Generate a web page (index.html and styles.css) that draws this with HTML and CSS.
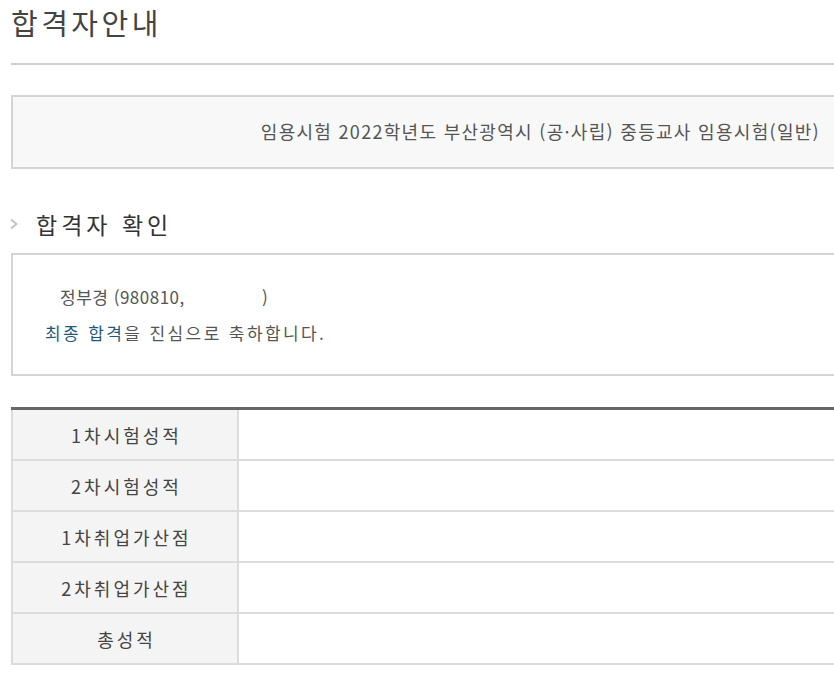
FILE: index.html
```html
<!DOCTYPE html>
<html lang="ko">
<head>
    <meta charset="UTF-8">
    <meta name="viewport" content="width=device-width, initial-scale=1.0">
    <title>합격자안내</title>
    <link rel="stylesheet" href="styles.css">
</head>
<body>
    <div class="page">
        <h1 class="page-title">합격자안내</h1>

        <!-- 시험 정보 -->
        <div class="exam-box">
            <p>임용시험 2022학년도 부산광역시 (공·사립) 중등교사 임용시험(일반)</p>
        </div>

        <h2 class="section-title">
            <svg class="arrow" width="10" height="12" viewBox="0 0 10 12">
                <path d="M2 1.5 L7.5 6 L2 10.5" fill="none" stroke="#c4c4c4" stroke-width="2"/>
            </svg>
            합격자 확인
        </h2>

        <!-- 합격 메시지 -->
        <div class="result-box">
            <p class="name">정부경 (980810, <span class="blank"></span>)</p>
            <p><span class="pass">최종 합격</span>을 진심으로 축하합니다.</p>
        </div>

        <!-- 성적 -->
        <table class="score-table">
            <tr><th>1차시험성적</th><td></td></tr>
            <tr><th>2차시험성적</th><td></td></tr>
            <tr><th>1차취업가산점</th><td></td></tr>
            <tr><th>2차취업가산점</th><td></td></tr>
            <tr><th>총성적</th><td></td></tr>
        </table>
    </div>
</body>
</html>
```

FILE: styles.css
```css
/* 기본 */
body {
    margin: 0;
    font-family: "Noto Sans CJK KR", "Noto Sans", sans-serif;
    color: #555;
    background: #fff;
    overflow: hidden;
}

.page {
    padding-left: 11px;
}

p {
    margin: 0;
}

/* 페이지 제목 */
.page-title {
    margin: 0;
    padding: 4px 0 23px;
    font-size: 29px;
    font-weight: normal;
    line-height: 36px;
    letter-spacing: 3.5px;
    color: #444;
    border-bottom: 2px solid #cfcfcf;
}

/* 시험 정보 박스 */
.exam-box {
    margin-top: 30px;
    border: 2px solid #d4d4d4;
    border-right: none;
    background-color: #f8f8f8;
    display: flex;
    align-items: center;
    justify-content: flex-end;
    padding: 0 14px 3px 0;
    box-sizing: border-box;
    height: 74px;
    font-size: 18px;
    letter-spacing: 1.3px;
    color: #555;
}

/* 소제목 */
.section-title {
    margin: 40px 0 0;
    font-size: 23px;
    font-weight: normal;
    line-height: 30px;
    letter-spacing: 4px;
    color: #333;
    display: flex;
    align-items: center;
    gap: 17px;
    margin-left: -2px;
}

.arrow {
    display: block;
}

/* 합격 메시지 박스 */
.result-box {
    margin-top: 14px;
    border: 2px solid #d4d4d4;
    border-right: none;
    padding: 24px 0 23px 32px;
    font-size: 17px;
    line-height: 36px;
    letter-spacing: 2.4px;
    color: #555;
}

.result-box .name {
    padding-left: 15px;
    letter-spacing: 0.5px;
}

.blank {
    display: inline-block;
    width: 72px;
}

.pass {
    color: #1f5a7c;
}

/* 성적표 */
.score-table {
    margin-top: 31px;
    width: 100%;
    border-collapse: collapse;
    border-top: 3px solid #666;
    border-left: 2px solid #dcdcdc;
}

.score-table th,
.score-table td {
    height: 49px;
    padding: 0;
    border-bottom: 2px solid #dcdcdc;
}

.score-table th {
    width: 221px;
    background-color: #f4f4f4;
    border-right: 2px solid #dcdcdc;
    padding-left: 3px;
    font-size: 18px;
    font-weight: normal;
    letter-spacing: 3px;
    color: #444;
    text-align: center;
}

.score-table td {
    background-color: #fff;
}
```
